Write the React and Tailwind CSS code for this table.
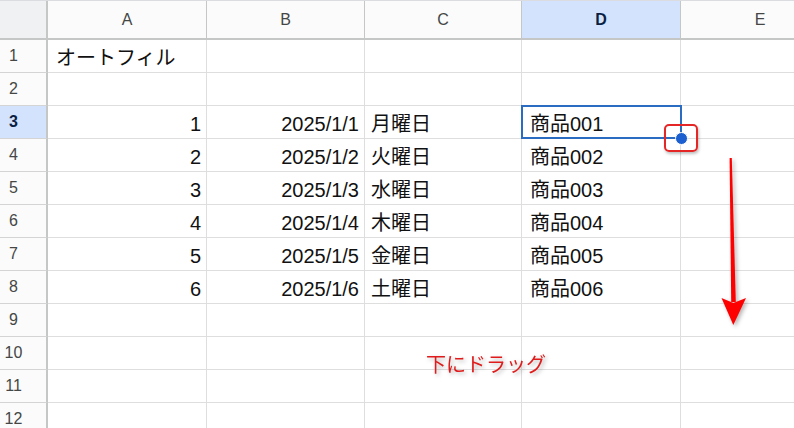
import React from "react";

const days = ["月", "火", "水", "木", "金", "土"];

const rows = [
  { a: "オートフィル", aText: true },
  {},
  ...days.map((d, i) => ({
    a: String(i + 1),
    b: `2025/1/${i + 1}`,
    c: `${d}曜日`,
    d: `商品00${i + 1}`,
  })),
  {},
  {},
  {},
  {},
];

const cols = [
  { key: "A", w: "w-[159px]" },
  { key: "B", w: "w-[158px]" },
  { key: "C", w: "w-[157px]" },
  { key: "D", w: "w-[159px]" },
  { key: "E", w: "w-[159px]" },
];

const cellBase =
  "shrink-0 h-full flex items-end pb-[3px] border-r border-b border-[#dedede] text-[20px] leading-[22px] text-[#111] whitespace-nowrap";

const App = () => {
  return (
    <div
      className="relative w-[794px] h-[428px] overflow-hidden bg-white"
      style={{ fontFamily: '"Liberation Sans", "Noto Sans CJK JP", sans-serif' }}
    >
      {/* column headers */}
      <div className="flex h-[40px] border-t border-[#dadce0]">
        <div className="w-[48px] shrink-0 h-full bg-[#eff1f2] border-r-2 border-b-2 border-[#c4c7c5]" />
        {cols.map((c) => (
          <div
            key={c.key}
            className={`${c.w} shrink-0 h-full flex items-center justify-center border-r border-b-2 border-[#c4c7c5] text-[16px] ${
              c.key === "D"
                ? "bg-[#d3e3fd] font-bold text-[#0b1f44]"
                : "bg-[#fbfbfb] text-[#444746]"
            }`}
          >
            {c.key}
          </div>
        ))}
      </div>

      {/* rows */}
      {rows.map((r, i) => {
        const n = i + 1;
        const sel = n === 3;
        return (
          <div key={n} className="flex h-[33px]">
            <div
              className={`w-[48px] shrink-0 h-full flex items-center border-r-2 border-b border-r-[#c4c7c5] border-b-[#d4d4d4] text-[16px] ${
                sel ? "bg-[#d3e3fd] font-bold text-[#0b1f44]" : "bg-[#fbfbfb] text-[#444746]"
              }`}
            >
              <span className="w-[27px] text-center">{n}</span>
            </div>
            <div className={`${cols[0].w} ${cellBase} ${r.aText ? "pl-[8px]" : "justify-end pr-[5px]"}`}>
              {r.a}
            </div>
            <div className={`${cols[1].w} ${cellBase} justify-end pr-[5px]`}>{r.b}</div>
            <div className={`${cols[2].w} ${cellBase} pl-[6px]`}>{r.c}</div>
            <div className={`${cols[3].w} ${cellBase} pl-[8px]`}>{r.d}</div>
            <div className={`${cols[4].w} ${cellBase}`} />
          </div>
        );
      })}

      {/* selection on D3 */}
      <div className="absolute left-[521px] top-[105px] w-[161px] h-[34px] border-2 border-[#2a6cc2]" />

      {/* red highlight around fill handle */}
      <div className="absolute left-[664px] top-[124px] w-[34px] h-[28px] rounded-[5px] border-2 border-[#e42626] shadow-[1px_2px_3px_rgba(0,0,0,0.25)]" />

      {/* fill handle */}
      <div className="absolute left-[675px] top-[132px] w-[13px] h-[13px] rounded-full bg-[#1b5fd0] border border-white" />

      {/* arrow */}
      <svg
        className="absolute left-[715px] top-[150px] drop-shadow-[2px_2px_2px_rgba(0,0,0,0.3)]"
        width="40"
        height="185"
        viewBox="0 0 40 185"
      >
        <polygon points="14.6,8 16.8,8 20.8,152 16.2,152" fill="#ff0000" />
        <polygon points="6.5,148 18.4,153 31,148 18.3,175" fill="#ff0000" />
      </svg>

      {/* label */}
      <div
        className="absolute left-[426px] top-[352px] text-[20px] leading-[24px] text-[#e01b1b] drop-shadow-[2px_2px_2px_rgba(0,0,0,0.3)]"
        style={{ fontFamily: '"Noto Sans CJK JP", sans-serif' }}
      >
        下にドラッグ
      </div>
    </div>
  );
};

export default App;
